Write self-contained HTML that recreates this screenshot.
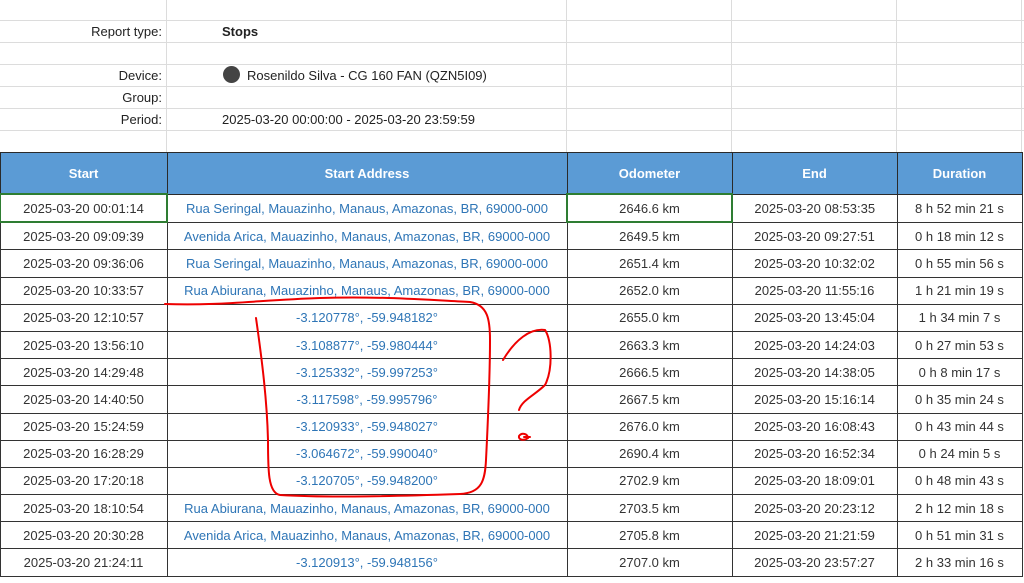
<!DOCTYPE html>
<html><head><meta charset="utf-8"><style>
body{margin:0;width:1024px;height:583px;overflow:hidden;background:#fff;font-family:"Liberation Sans",sans-serif;font-size:13px;color:#222;position:relative}
.t{position:absolute;white-space:nowrap}
.hl{position:absolute;left:0;width:1024px;height:1px;background:#dcdcdc}
.vl{position:absolute;top:0;width:1px;height:152px;background:#dcdcdc}
table{position:absolute;left:-1px;top:152px;border-collapse:collapse;table-layout:fixed}
td,th{border:1px solid #333;text-align:center;white-space:nowrap;overflow:hidden;padding:0;font-size:13px}
th{background:#5b9bd5;color:#fff;height:40px;font-weight:bold;border-color:#2a2a2a}
td{height:26.2px;color:#333}
td.a{color:#2e75b6}
</style></head><body>
<div class="hl" style="top:20px"></div><div class="hl" style="top:42px"></div><div class="hl" style="top:64px"></div><div class="hl" style="top:86px"></div><div class="hl" style="top:108px"></div><div class="hl" style="top:130px"></div>
<div class="vl" style="left:166px"></div><div class="vl" style="left:566px"></div><div class="vl" style="left:731px"></div><div class="vl" style="left:896px"></div><div class="vl" style="left:1021px"></div>
<div class="t" style="right:862px;top:24px">Report type:</div>
<div class="t" style="left:222px;top:24px;font-weight:bold">Stops</div>
<div class="t" style="right:862px;top:68px">Device:</div>
<div style="position:absolute;left:223px;top:66px;width:17px;height:17px;border-radius:50%;background:#444"></div>
<div class="t" style="left:247px;top:68px">Rosenildo Silva - CG 160 FAN (QZN5I09)</div>
<div class="t" style="right:862px;top:90px">Group:</div>
<div class="t" style="right:862px;top:112px">Period:</div>
<div class="t" style="left:222px;top:112px">2025-03-20 00:00:00 - 2025-03-20 23:59:59</div>
<table>
<colgroup><col style="width:167px"><col style="width:400px"><col style="width:165px"><col style="width:165px"><col style="width:125px"></colgroup>
<tr><th>Start</th><th>Start Address</th><th>Odometer</th><th>End</th><th>Duration</th></tr>
<tr><td style="border:2px solid #2e7d32">2025-03-20 00:01:14</td><td class="a">Rua Seringal, Mauazinho, Manaus, Amazonas, BR, 69000-000</td><td style="border:2px solid #2e7d32">2646.6 km</td><td>2025-03-20 08:53:35</td><td>8 h 52 min 21 s</td></tr>
<tr><td>2025-03-20 09:09:39</td><td class="a">Avenida Arica, Mauazinho, Manaus, Amazonas, BR, 69000-000</td><td>2649.5 km</td><td>2025-03-20 09:27:51</td><td>0 h 18 min 12 s</td></tr>
<tr><td>2025-03-20 09:36:06</td><td class="a">Rua Seringal, Mauazinho, Manaus, Amazonas, BR, 69000-000</td><td>2651.4 km</td><td>2025-03-20 10:32:02</td><td>0 h 55 min 56 s</td></tr>
<tr><td>2025-03-20 10:33:57</td><td class="a">Rua Abiurana, Mauazinho, Manaus, Amazonas, BR, 69000-000</td><td>2652.0 km</td><td>2025-03-20 11:55:16</td><td>1 h 21 min 19 s</td></tr>
<tr><td>2025-03-20 12:10:57</td><td class="a">-3.120778°, -59.948182°</td><td>2655.0 km</td><td>2025-03-20 13:45:04</td><td>1 h 34 min 7 s</td></tr>
<tr><td>2025-03-20 13:56:10</td><td class="a">-3.108877°, -59.980444°</td><td>2663.3 km</td><td>2025-03-20 14:24:03</td><td>0 h 27 min 53 s</td></tr>
<tr><td>2025-03-20 14:29:48</td><td class="a">-3.125332°, -59.997253°</td><td>2666.5 km</td><td>2025-03-20 14:38:05</td><td>0 h 8 min 17 s</td></tr>
<tr><td>2025-03-20 14:40:50</td><td class="a">-3.117598°, -59.995796°</td><td>2667.5 km</td><td>2025-03-20 15:16:14</td><td>0 h 35 min 24 s</td></tr>
<tr><td>2025-03-20 15:24:59</td><td class="a">-3.120933°, -59.948027°</td><td>2676.0 km</td><td>2025-03-20 16:08:43</td><td>0 h 43 min 44 s</td></tr>
<tr><td>2025-03-20 16:28:29</td><td class="a">-3.064672°, -59.990040°</td><td>2690.4 km</td><td>2025-03-20 16:52:34</td><td>0 h 24 min 5 s</td></tr>
<tr><td>2025-03-20 17:20:18</td><td class="a">-3.120705°, -59.948200°</td><td>2702.9 km</td><td>2025-03-20 18:09:01</td><td>0 h 48 min 43 s</td></tr>
<tr><td>2025-03-20 18:10:54</td><td class="a">Rua Abiurana, Mauazinho, Manaus, Amazonas, BR, 69000-000</td><td>2703.5 km</td><td>2025-03-20 20:23:12</td><td>2 h 12 min 18 s</td></tr>
<tr><td>2025-03-20 20:30:28</td><td class="a">Avenida Arica, Mauazinho, Manaus, Amazonas, BR, 69000-000</td><td>2705.8 km</td><td>2025-03-20 21:21:59</td><td>0 h 51 min 31 s</td></tr>
<tr><td>2025-03-20 21:24:11</td><td class="a">-3.120913°, -59.948156°</td><td>2707.0 km</td><td>2025-03-20 23:57:27</td><td>2 h 33 min 16 s</td></tr>
</table>
<svg style="position:absolute;left:0;top:0" width="1024" height="583" fill="none" stroke="#e00" stroke-width="2" stroke-linecap="round">
<path d="M165 304 C220 306 260 300 320 298 C380 296 430 300 470 302 C488 305 490 320 490 340 C490 380 488 420 486 460 C485 480 482 493 460 494 C400 496 330 498 280 495 C268 493 268 470 268 440 C267 400 262 360 256 318"/>
<path d="M503 360 C515 340 530 328 545 330 C552 340 553 370 545 385 C535 395 522 400 519 410"/>
<path d="M519 436 C522 432 528 434 528 438 C524 441 518 440 519 436 M524 437 L530 437"/>
</svg>
</body></html>
